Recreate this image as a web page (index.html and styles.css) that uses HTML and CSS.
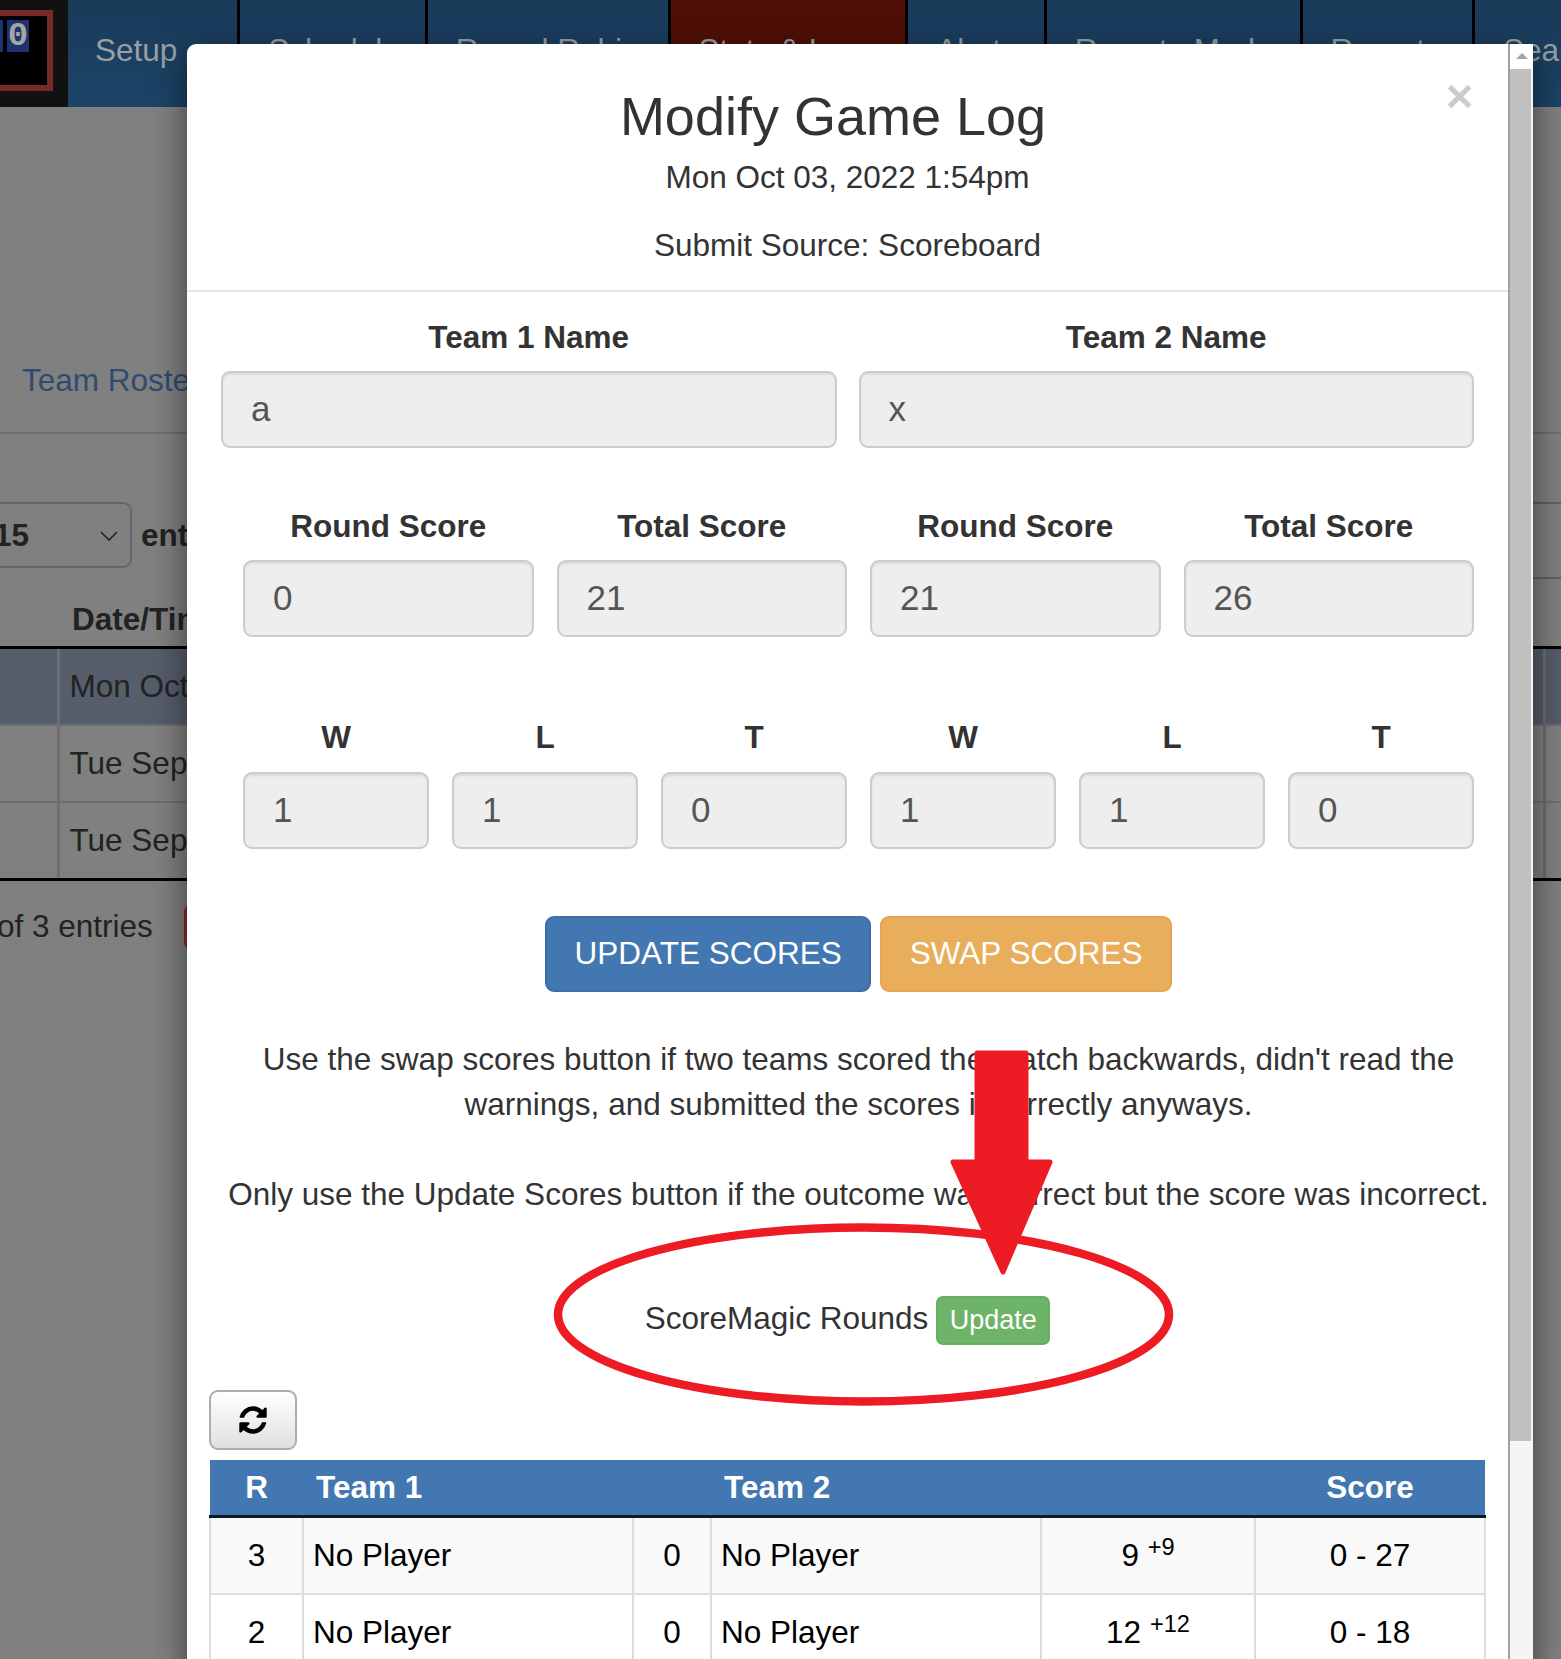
FILE: index.html
```html
<!DOCTYPE html>
<html>
<head>
    <meta charset="UTF-8" />
    <title>Modify Game Log</title>
    <link rel="stylesheet" href="styles.css">
</head>

<body>
    <div class="nav">
        <div class="logo">
            <div class="logo-frame"><span class="logo-digit">0</span></div>
        </div>
        <a class="nav-item">Setup</a>
        <a class="nav-item">Schedule</a>
        <a class="nav-item">Round Robin</a>
        <a class="nav-item active">Stats &amp; Logs</a>
        <a class="nav-item">Alerts</a>
        <a class="nav-item">Remote Mode</a>
        <a class="nav-item">Reports</a>
        <a class="nav-item">Search</a>
    </div>

    <div class="tabs"><a class="tab-link">Team Roster</a></div>

    <div class="filter-row">
        <div class="length-select">
            <span class="length-box">15
                <svg class="chevron" viewBox="0 0 18 10"><path d="M1 1l8 8 8-8" fill="none" stroke="#222" stroke-width="1.6"/></svg>
            </span>
            <b>entries</b>
        </div>
        <div class="search-box"></div>
    </div>

    <table class="log-table">
        <thead>
            <tr><th class="log-first"></th><th>Date/Time</th><th class="log-last"></th></tr>
        </thead>
        <tbody>
            <tr class="selected"><td></td><td>Mon Oct</td><td></td></tr>
            <tr><td></td><td>Tue Sep</td><td></td></tr>
            <tr><td></td><td>Tue Sep</td><td></td></tr>
        </tbody>
    </table>

    <div class="page-foot">
        <span class="page-info">of 3 entries</span>
        <span class="page-button"></span>
    </div>

    <div class="modal">
        <div class="modal-content">
            <div class="modal-header">
                <span class="close">&times;</span>
                <h2 class="modal-title">Modify Game Log</h2>
                <p class="modal-sub">Mon Oct 03, 2022 1:54pm</p>
                <p class="modal-sub source">Submit Source: Scoreboard</p>
            </div>

            <div class="modal-body">
                <div class="field-grid teams">
                    <div class="field"><label>Team 1 Name</label><input value="a" readonly></div>
                    <div class="field"><label>Team 2 Name</label><input value="x" readonly></div>
                </div>

                <div class="field-grid scores">
                    <div class="field"><label>Round Score</label><input value="0" readonly></div>
                    <div class="field"><label>Total Score</label><input value="21" readonly></div>
                    <div class="field"><label>Round Score</label><input value="21" readonly></div>
                    <div class="field"><label>Total Score</label><input value="26" readonly></div>
                </div>

                <div class="field-grid records">
                    <div class="field"><label>W</label><input value="1" readonly></div>
                    <div class="field"><label>L</label><input value="1" readonly></div>
                    <div class="field"><label>T</label><input value="0" readonly></div>
                    <div class="field"><label>W</label><input value="1" readonly></div>
                    <div class="field"><label>L</label><input value="1" readonly></div>
                    <div class="field"><label>T</label><input value="0" readonly></div>
                </div>

                <div class="actions">
                    <button class="btn primary">UPDATE SCORES</button>
                    <button class="btn warning">SWAP SCORES</button>
                </div>

                <div class="notes">
                    <p>Use the swap scores button if two teams scored the match backwards, didn't read the<br>warnings, and submitted the scores incorrectly anyways.</p>
                    <p>Only use the Update Scores button if the outcome was correct but the score was incorrect.</p>
                </div>

                <div class="magic-row">
                    <span class="magic-label">ScoreMagic Rounds</span>
                    <button class="btn-small">Update</button>
                </div>

                <button class="refresh">
                    <svg class="refresh-icon" viewBox="0 0 1792 1792"><path d="M1639 1056q0 5-1 7-64 268-268 434.5t-478 166.5q-146 0-282.5-55t-243.5-157l-129 129q-19 19-45 19t-45-19-19-45v-448q0-26 19-45t45-19h448q26 0 45 19t19 45-19 45l-137 137q71 66 161 102t187 36q134 0 250-65t186-179q11-17 53-117 8-23 30-23h192q13 0 22.5 9.5t9.5 22.5zm25-800v448q0 26-19 45t-45 19h-448q-26 0-45-19t-19-45 19-45l138-138q-148-137-349-137-134 0-250 65t-186 179q-11 17-53 117-8 23-30 23h-199q-13 0-22.5-9.5t-9.5-22.5v-7q65-268 270-434.5t480-166.5q146 0 284 55.5t245 156.5l130-129q19-19 45-19t45 19 19 45z"/></svg>
                </button>

                <table class="rounds">
                    <colgroup>
                        <col class="c-round"><col class="c-name"><col class="c-num">
                        <col class="c-name"><col class="c-gain"><col class="c-score">
                    </colgroup>
                    <thead>
                        <tr>
                            <th class="center">R</th>
                            <th colspan="2">Team 1</th>
                            <th colspan="2">Team 2</th>
                            <th class="center">Score</th>
                        </tr>
                    </thead>
                    <tbody>
                        <tr>
                            <td class="center">3</td><td>No Player</td><td class="center">0</td>
                            <td>No Player</td><td class="center">9 <sup>+9</sup></td><td class="center">0 - 27</td>
                        </tr>
                        <tr>
                            <td class="center">2</td><td>No Player</td><td class="center">0</td>
                            <td>No Player</td><td class="center">12 <sup>+12</sup></td><td class="center">0 - 18</td>
                        </tr>
                    </tbody>
                </table>
            </div>
        </div>

        <div class="scrollbar">
            <div class="scroll-up"></div>
            <div class="scroll-thumb"></div>
        </div>
    </div>

    <!-- red markup drawn on top of the screenshot -->
    <svg class="markup" viewBox="0 0 1561 1659">
        <ellipse cx="863.5" cy="1314.5" rx="305.5" ry="87" fill="none" stroke="#ed1c24" stroke-width="8.5"/>
        <path d="M977 1053h49v109h24l-47 110-50-110h24z" fill="#ed1c24" stroke="#ed1c24" stroke-width="5" stroke-linejoin="round"/>
    </svg>
</body>
</html>
```

FILE: styles.css
```css
html, body {
    height: 100%;
    overflow: hidden;
}
body {
    margin: 0;
    position: relative;
    background-color: #808080;
    font-family: "Liberation Sans", Arial, sans-serif;
    font-size: 31.5px;
    line-height: 45px;
    color: #222222;
}

/* page behind the dialog */
.nav {
    display: flex;
    height: 107px;
    background: linear-gradient(#1a3a59, #1c4468);
}
.logo {
    width: 68px;
    flex: none;
    box-sizing: border-box;
    padding-top: 10px;
    background-color: #111111;
}
.logo-frame {
    box-sizing: border-box;
    width: 53px;
    height: 81px;
    padding: 4px 0 0 7px;
    background-color: #000000;
    border: solid #752b26;
    border-width: 6px 6px 6px 0;
}
.logo-digit {
    display: block;
    width: 22px;
    height: 32px;
    background-color: #1f3270;
    box-shadow: -26px 0 0 #1f3270;
    color: #a5a5a5;
    font-family: "Liberation Mono", monospace;
    font-weight: bold;
    font-size: 34px;
    line-height: 32px;
    text-align: center;
}
.nav-item {
    flex: none;
    padding: 28px 28px 0 28px;
    border-right: 3px solid #000000;
    color: #9a9fa3;
}
.nav-item:nth-child(2) {
    padding-left: 27px;
    padding-right: 60px;
}
.nav-item:nth-child(3) {
    padding-right: 25px;
}
.nav-item:nth-child(6),
.nav-item:nth-child(7) {
    padding-right: 27px;
}
.nav-item:nth-child(8) {
    padding-right: 31px;
}
.nav-item:last-child {
    border-right: none;
}
.nav-item.active {
    background-color: #4f0f06;
}

.tabs {
    height: 327px;
    box-sizing: border-box;
    padding: 251px 0 0 22px;
    border-bottom: 2px solid #6e6e6e;
}
.tab-link {
    color: #2f4c70;
}

.filter-row {
    display: flex;
    justify-content: space-between;
    align-items: flex-start;
    margin-top: 68px;
    height: 77px;
}
.length-select {
    display: flex;
    align-items: center;
    gap: 9px;
    height: 66px;
    margin-left: -30px;
}
.length-box {
    display: flex;
    align-items: center;
    justify-content: space-between;
    box-sizing: border-box;
    width: 162px;
    height: 66px;
    padding: 1px 12px 0 22px;
    border: 2px solid #666666;
    border-radius: 9px;
    font-weight: bold;
}
.chevron {
    width: 18px;
    height: 10px;
}
.search-box {
    width: 400px;
    height: 77px;
    box-sizing: border-box;
    border: solid #626262;
    border-width: 2px 0;
}

.log-table {
    table-layout: fixed;
    width: 100%;
    margin-top: 0;
    border-collapse: collapse;
}
.log-table th {
    height: 68px;
    padding: 15px 14px 0 14px;
    box-sizing: border-box;
    text-align: left;
    border-bottom: 3px solid #000000;
}
.log-table td {
    height: 75px;
    padding: 0 10px;
    border: 2px solid #6e6e6e;
    border-left-width: 3px;
}
.log-table tbody tr:last-child td {
    border-bottom: 3px solid #000000;
}
.log-table td:first-child {
    border-left: none;
}
.log-table td:last-child {
    border-right: none;
}
.log-table .log-first {
    width: 58px;
    padding: 0;
}
.log-table .log-last {
    width: 17px;
    padding: 0;
}
.log-table .selected td {
    background-color: #565d6b;
}

.page-foot {
    display: flex;
    align-items: center;
    margin-top: 22px;
    height: 48px;
}
.page-info {
    width: 187px;
    margin-left: -3px;
}
.page-button {
    width: 60px;
    height: 48px;
    background-color: #8a2a25;
    border-radius: 9px;
}

/* the dialog */
.modal {
    position: absolute;
    top: 44px;
    left: 187px;
    width: 1346px;
    display: flex;
    background-color: #ffffff;
    border-radius: 9px 0 0 0;
    box-shadow: 0 10px 34px rgba(0, 0, 0, 0.55);
    color: #333333;
}
.modal-content {
    flex: 1;
    min-width: 0;
    border-right: 2px solid #a0a0a0;
}
.modal-header {
    padding: 34px 34px 22px 34px;
    border-bottom: 2px solid #e5e5e5;
    text-align: center;
}
.close {
    float: right;
    width: 29px;
    margin-top: -6px;
    font-weight: bold;
    font-size: 47px;
    line-height: 47px;
    color: #cccccc;
}
.modal-title {
    margin: 0;
    font-weight: 500;
    font-size: 54px;
    line-height: 77px;
}
.modal-sub {
    margin: 0;
}
.modal-sub.source {
    margin-top: 23px;
}
.modal-body {
    padding-top: 23px;
}

.field-grid {
    display: grid;
    gap: 23px;
}
.field label {
    display: block;
    margin-bottom: 11px;
    font-weight: bold;
    text-align: center;
}
.field input {
    display: block;
    box-sizing: border-box;
    width: 100%;
    height: 77px;
    padding: 0 27px 2px 28px;
    background-color: #eeeeee;
    border: 2px solid #cccccc;
    border-radius: 9px;
    box-shadow: inset 0 2px 2px rgba(0, 0, 0, 0.075);
    color: #555555;
    font-family: inherit;
    font-size: 35px;
    outline: none;
}
.teams {
    grid-template-columns: 1fr 1fr;
    gap: 22px;
    padding: 0 34px;
}
.scores {
    grid-template-columns: repeat(4, 1fr);
    margin-top: 56px;
    padding: 0 34px 0 56px;
}
.records {
    grid-template-columns: repeat(6, 1fr);
    margin-top: 78px;
    padding: 0 34px 0 56px;
}
.records label {
    margin-bottom: 12px;
}

.actions {
    display: flex;
    justify-content: center;
    gap: 9px;
    margin-top: 67px;
    padding-left: 22px;
}
.btn {
    height: 76px;
    padding: 0 27.5px 2px 27.5px;
    border: 2px solid;
    border-radius: 9px;
    color: #ffffff;
    font-family: inherit;
    font-size: inherit;
}
.btn.primary {
    background-color: #4277b1;
    border-color: #3c6fa8;
}
.btn.warning {
    background-color: #e8ae5c;
    border-color: #e5a64f;
}

.notes {
    margin-top: 45px;
    padding-left: 22px;
    text-align: center;
}
.notes p {
    margin: 0 0 45px 0;
}

.magic-row {
    display: flex;
    justify-content: center;
    align-items: center;
    gap: 8px;
    margin-top: 79px;
}
.magic-label {
    padding-bottom: 4px;
}
.btn-small {
    width: 114px;
    height: 49px;
    padding: 0;
    background-color: #6db368;
    border: 2px solid #66ad60;
    border-radius: 7px;
    color: #ffffff;
    font-family: inherit;
    font-size: 27px;
}

.refresh {
    display: flex;
    align-items: center;
    justify-content: center;
    width: 88px;
    height: 60px;
    margin: 45px 0 10px 22px;
    padding: 0;
    background: linear-gradient(#ffffff, #e0e0e0);
    border: 2px solid #adadad;
    border-radius: 9px;
}
.refresh-icon {
    width: 32px;
    height: 32px;
    fill: #000000;
}

.rounds {
    table-layout: fixed;
    width: 1275px;
    margin-left: 22px;
    border-collapse: collapse;
    color: #000000;
}
.c-round { width: 93px; }
.c-name { width: 330px; }
.c-num { width: 78px; }
.c-gain { width: 214px; }
.c-score { width: 230px; }
.rounds th {
    height: 55px;
    padding: 0 13px;
    background-color: #4277b1;
    border-bottom: 3px solid #0b1a2b;
    color: #ffffff;
    text-align: left;
}
.rounds td {
    height: 77px;
    padding: 0 9px;
    border: 2px solid #dddddd;
    box-sizing: border-box;
}
.rounds tbody tr:nth-child(odd) {
    background-color: #f9f9f9;
}
.rounds .center {
    text-align: center;
}
.rounds sup {
    font-size: 75%;
    line-height: 0;
}

.scrollbar {
    flex: none;
    width: 23px;
    background-color: #f5f5f5;
}
.scroll-up {
    position: relative;
    height: 25px;
    background-color: #ffffff;
}
.scroll-up::after {
    content: "";
    position: absolute;
    left: 6px;
    top: 9px;
    border: 6px solid transparent;
    border-top: none;
    border-bottom: 6px solid #a3a3a3;
}
.scroll-thumb {
    width: 21px;
    height: 1372px;
    background-color: #c0c0c0;
}

.markup {
    position: absolute;
    top: 0;
    left: 0;
    width: 1561px;
    height: 1659px;
    pointer-events: none;
}
```
